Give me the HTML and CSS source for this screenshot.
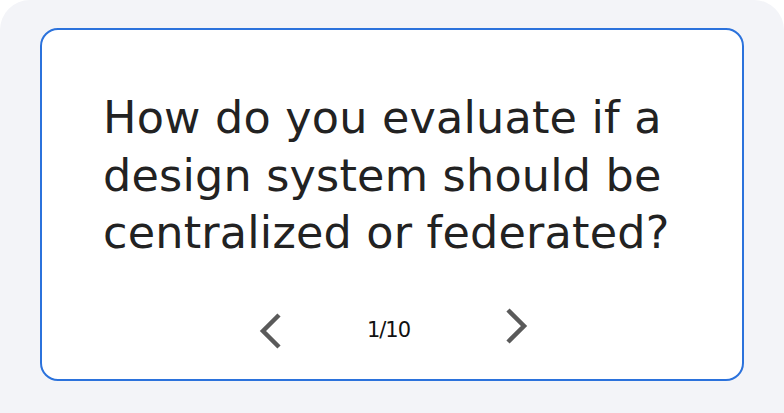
FILE: index.html
```html
<!DOCTYPE html>
<html>
<head>
<meta charset="utf-8">
<link rel="stylesheet" href="styles.css">
</head>
<body>
<div class="panel">
  <div class="card">
    <p class="question">How do you evaluate if a design system should be centralized or federated?</p>
    <div class="pager">
      <button class="nav prev" aria-label="Previous">
        <svg width="26" height="38" viewBox="0 0 26 38"><path d="M22 3 L6 19 L22 35" fill="none" stroke="#5a5a5a" stroke-width="4.5" stroke-linejoin="miter"/></svg>
      </button>
      <span class="count">1/10</span>
      <button class="nav next" aria-label="Next">
        <svg width="26" height="38" viewBox="0 0 26 38"><path d="M4 3 L20 19 L4 35" fill="none" stroke="#5a5a5a" stroke-width="4.5" stroke-linejoin="miter"/></svg>
      </button>
    </div>
  </div>
</div>
</body>
</html>
```
FILE: styles.css
```css
html, body {
  margin: 0;
  padding: 0;
  background: #ffffff;
}
.panel {
  background: #f3f4f8;
  border-radius: 30px 30px 0 0;
  padding: 28px 40px 40px;
  height: 420px;
  box-sizing: border-box;
}
.card {
  background: #ffffff;
  border: 2px solid #2b72dc;
  border-radius: 18px;
  height: 353px;
  box-sizing: border-box;
  padding: 59px 40px 0 61px;
  display: flex;
  flex-direction: column;
}
.question {
  margin: 0;
  max-width: 600px;
  font-family: "DejaVu Sans", sans-serif;
  font-size: 44.5px;
  line-height: 57.5px;
  letter-spacing: 0.2px;
  color: #222222;
}
.pager {
  display: flex;
  align-items: flex-start;
  justify-content: center;
  gap: 84px;
  margin-top: 45px;
  padding-right: 18px;
}
.nav {
  background: none;
  border: 0;
  padding: 0;
  display: flex;
}
.prev { margin-top: 5px; }
.next { margin-top: 0; }
.count {
  margin-top: 11px;
  margin-right: 10px;
  font-family: "DejaVu Sans", sans-serif;
  font-size: 21px;
  line-height: 24px;
  letter-spacing: -1px;
  color: #111111;
}
```
